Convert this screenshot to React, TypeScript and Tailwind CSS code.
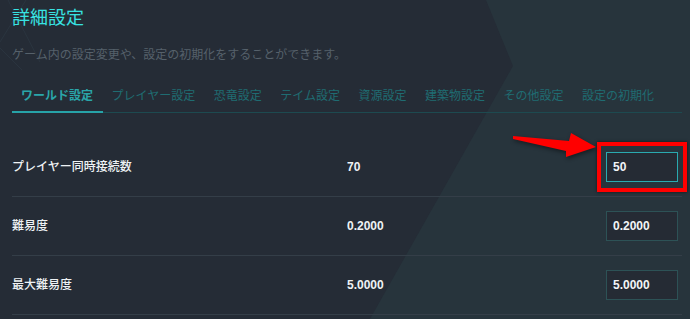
import React from "react";

const tabs = [
  "ワールド設定",
  "プレイヤー設定",
  "恐竜設定",
  "テイム設定",
  "資源設定",
  "建築物設定",
  "その他設定",
  "設定の初期化",
];

const rows = [
  { label: "プレイヤー同時接続数", value: "70", input: "50", focused: true },
  { label: "難易度", value: "0.2000", input: "0.2000" },
  { label: "最大難易度", value: "5.0000", input: "5.0000" },
];

function Backdrop() {
  return (
    <svg
      className="absolute inset-0 pointer-events-none"
      width="690"
      height="319"
      viewBox="0 0 690 319"
    >
      <polygon points="486,0 513,66 370,319 690,319 690,0" fill="#27343c" />
      <g stroke="#2c3742" strokeWidth="1" fill="none" opacity="0.8">
        <line x1="26" y1="0" x2="0" y2="42" />
        <line x1="0" y1="48" x2="22" y2="70" />
        <line x1="8" y1="0" x2="40" y2="62" />
      </g>
    </svg>
  );
}

function Arrow() {
  return (
    <svg
      className="absolute left-[510px] top-[130px] pointer-events-none"
      width="92"
      height="32"
      viewBox="0 0 92 32"
      style={{ filter: "drop-shadow(1px 2px 2px rgba(0,0,0,0.45))" }}
    >
      <polygon
        points="3,6 59,11 61,3 86,17 56,27 56,21 3,9"
        fill="#ff0000"
      />
    </svg>
  );
}

function Row({
  label,
  value,
  input,
  focused,
}: {
  label: string;
  value: string;
  input: string;
  focused?: boolean;
}) {
  return (
    <div className="flex items-center h-[59px] border-b border-[#343e48]">
      <div className="w-[335px] text-[12px] leading-[18px] font-medium text-[#eef2f4]">
        {label}
      </div>
      <div className="flex-1 text-[12px] leading-[18px] font-bold text-[#eef2f4]">
        {value}
      </div>
      <div className="relative mr-[4px]">
        {focused && (
          <div className="absolute -left-[9px] -top-[10px] w-[90px] h-[50px] border-4 border-[#ff0000] shadow-[0_0_3px_rgba(0,0,0,0.6)]" />
        )}
        <div
          className={`flex items-center w-[72px] h-[30px] pl-[6px] border bg-[#252b34] text-[12px] font-bold text-[#f2f5f7] ${
            focused ? "border-[#2aaab0]" : "border-[#2d5256]"
          }`}
        >
          {input}
        </div>
      </div>
    </div>
  );
}

export default function App() {
  return (
    <div
      className="relative w-[690px] h-[319px] overflow-hidden bg-[#252c36]"
      style={{ fontFamily: '"Liberation Sans", "Noto Sans CJK JP", sans-serif' }}
    >
      <Backdrop />
      <div className="relative pl-[12px] pr-[8px] pt-[6px]">
        <h1 className="text-[18px] leading-[24px] text-[#38e2e2]">詳細設定</h1>
        <p className="mt-[16px] text-[12px] leading-[18px] text-[#56616b]">
          ゲーム内の設定変更や、設定の初期化をすることができます。
        </p>
        <div className="mt-[14px] flex border-b border-[#1d4a50]">
          {tabs.map((t, i) => (
            <div
              key={t}
              className={`pl-[9px] pr-[9.5px] pt-[9px] pb-[6px] -mb-px text-[12px] leading-[18px] border-b-2 ${
                i === 0
                  ? "border-[#27a3a8] text-[#2aa6aa] font-bold"
                  : "border-transparent text-[#1f6c72]"
              }`}
            >
              {t}
            </div>
          ))}
        </div>
        <div className="pt-[25px]">
          {rows.map((r) => (
            <Row key={r.label} {...r} />
          ))}
        </div>
      </div>
      <Arrow />
    </div>
  );
}
